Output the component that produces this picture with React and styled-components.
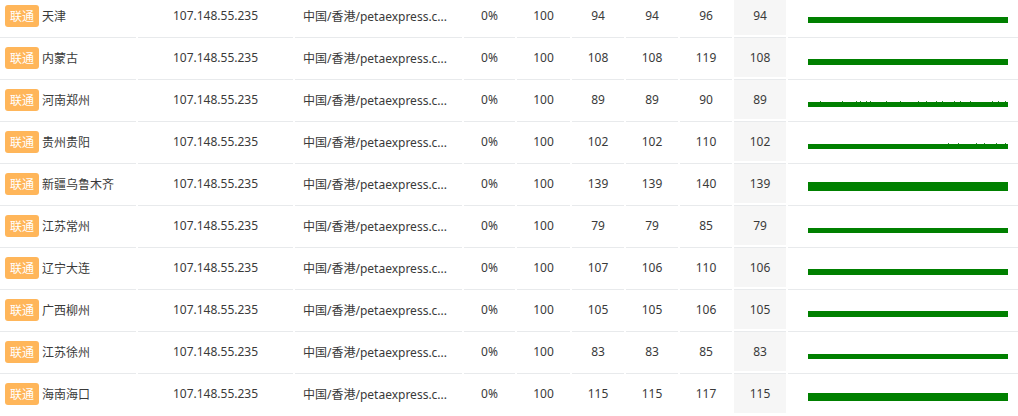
import React from "react";
import styled, { createGlobalStyle } from "styled-components";

const GlobalStyle = createGlobalStyle`
  html, body {
    margin: 0;
    padding: 0;
    background: #fff;
    overflow: hidden;
  }
  body {
    font-family: "Noto Sans", "Noto Sans CJK SC", sans-serif;
    font-size: 12px;
    color: #3a3a3a;
  }
`;

const Table = styled.div`
  display: grid;
  grid-template-columns: 136px 155px 167px 51px 53px 52px 52px 52px 52px 1fr;
  column-gap: 2px;
  row-gap: 2px;
  margin-top: -5px;
  width: 1018px;
`;

const Cell = styled.div`
  box-sizing: border-box;
  height: 40px;
  border-top: 1px solid #e8eaec;
  display: flex;
  align-items: center;
  justify-content: ${(p) => (p.$align === "left" ? "flex-start" : "center")};
  padding: ${(p) => p.$pad || "0"};
  background: ${(p) => (p.$shade ? "#f6f6f6" : "#fff")};
  white-space: nowrap;
  min-width: 0;
`;

const Tag = styled.span`
  display: inline-flex;
  align-items: center;
  justify-content: center;
  height: 22px;
  padding: 0 5px;
  margin-right: 3px;
  border-radius: 3px;
  background: #ffb65a;
  color: #fff;
  font-size: 12px;
`;

const ChartCell = styled(Cell)`
  align-items: flex-start;
  justify-content: flex-start;
  padding-left: 20px;
`;

const rows = [
  { city: "天津", last: 94, best: 94, worst: 96, avg: 94, h: 6 },
  { city: "内蒙古", last: 108, best: 108, worst: 119, avg: 108, h: 6 },
  { city: "河南郑州", last: 89, best: 89, worst: 90, avg: 89, h: 5, ticks: [12, 34, 48, 52, 58, 62, 78, 92, 110, 118, 128, 134, 146, 152, 162, 184, 190, 197] },
  { city: "贵州贵阳", last: 102, best: 102, worst: 110, avg: 102, h: 5, ticks: [140, 150, 168, 176, 188, 197] },
  { city: "新疆乌鲁木齐", last: 139, best: 139, worst: 140, avg: 139, h: 9 },
  { city: "江苏常州", last: 79, best: 79, worst: 85, avg: 79, h: 5 },
  { city: "辽宁大连", last: 107, best: 106, worst: 110, avg: 106, h: 6 },
  { city: "广西柳州", last: 105, best: 105, worst: 106, avg: 105, h: 6 },
  { city: "江苏徐州", last: 83, best: 83, worst: 85, avg: 83, h: 5 },
  { city: "海南海口", last: 115, best: 115, worst: 117, avg: 115, h: 8 },
];

const Spark = ({ h, ticks = [] }) => (
  <svg width="200" height="39" viewBox="0 0 200 39">
    <rect x="0" y={27 - h} width="200" height={h} fill="#008000" />
    {ticks.map((t, i) => (
      <rect key={i} x={t} y={27 - h - 1} width="1" height="1" fill="#2e8b2e" />
    ))}
  </svg>
);

const App = () => (
  <>
    <GlobalStyle />
    <Table>
      {rows.map((r) => (
        <React.Fragment key={r.city}>
          <Cell $align="left" $pad="0 0 0 5px">
            <Tag>联通</Tag>
            {r.city}
          </Cell>
          <Cell>107.148.55.235</Cell>
          <Cell $align="left" $pad="0 8px">
            中国/香港/petaexpress.c...
          </Cell>
          <Cell>0%</Cell>
          <Cell>100</Cell>
          <Cell>{r.last}</Cell>
          <Cell>{r.best}</Cell>
          <Cell>{r.worst}</Cell>
          <Cell $shade>{r.avg}</Cell>
          <ChartCell>
            <Spark h={r.h} ticks={r.ticks} />
          </ChartCell>
        </React.Fragment>
      ))}
    </Table>
  </>
);

export default App;
